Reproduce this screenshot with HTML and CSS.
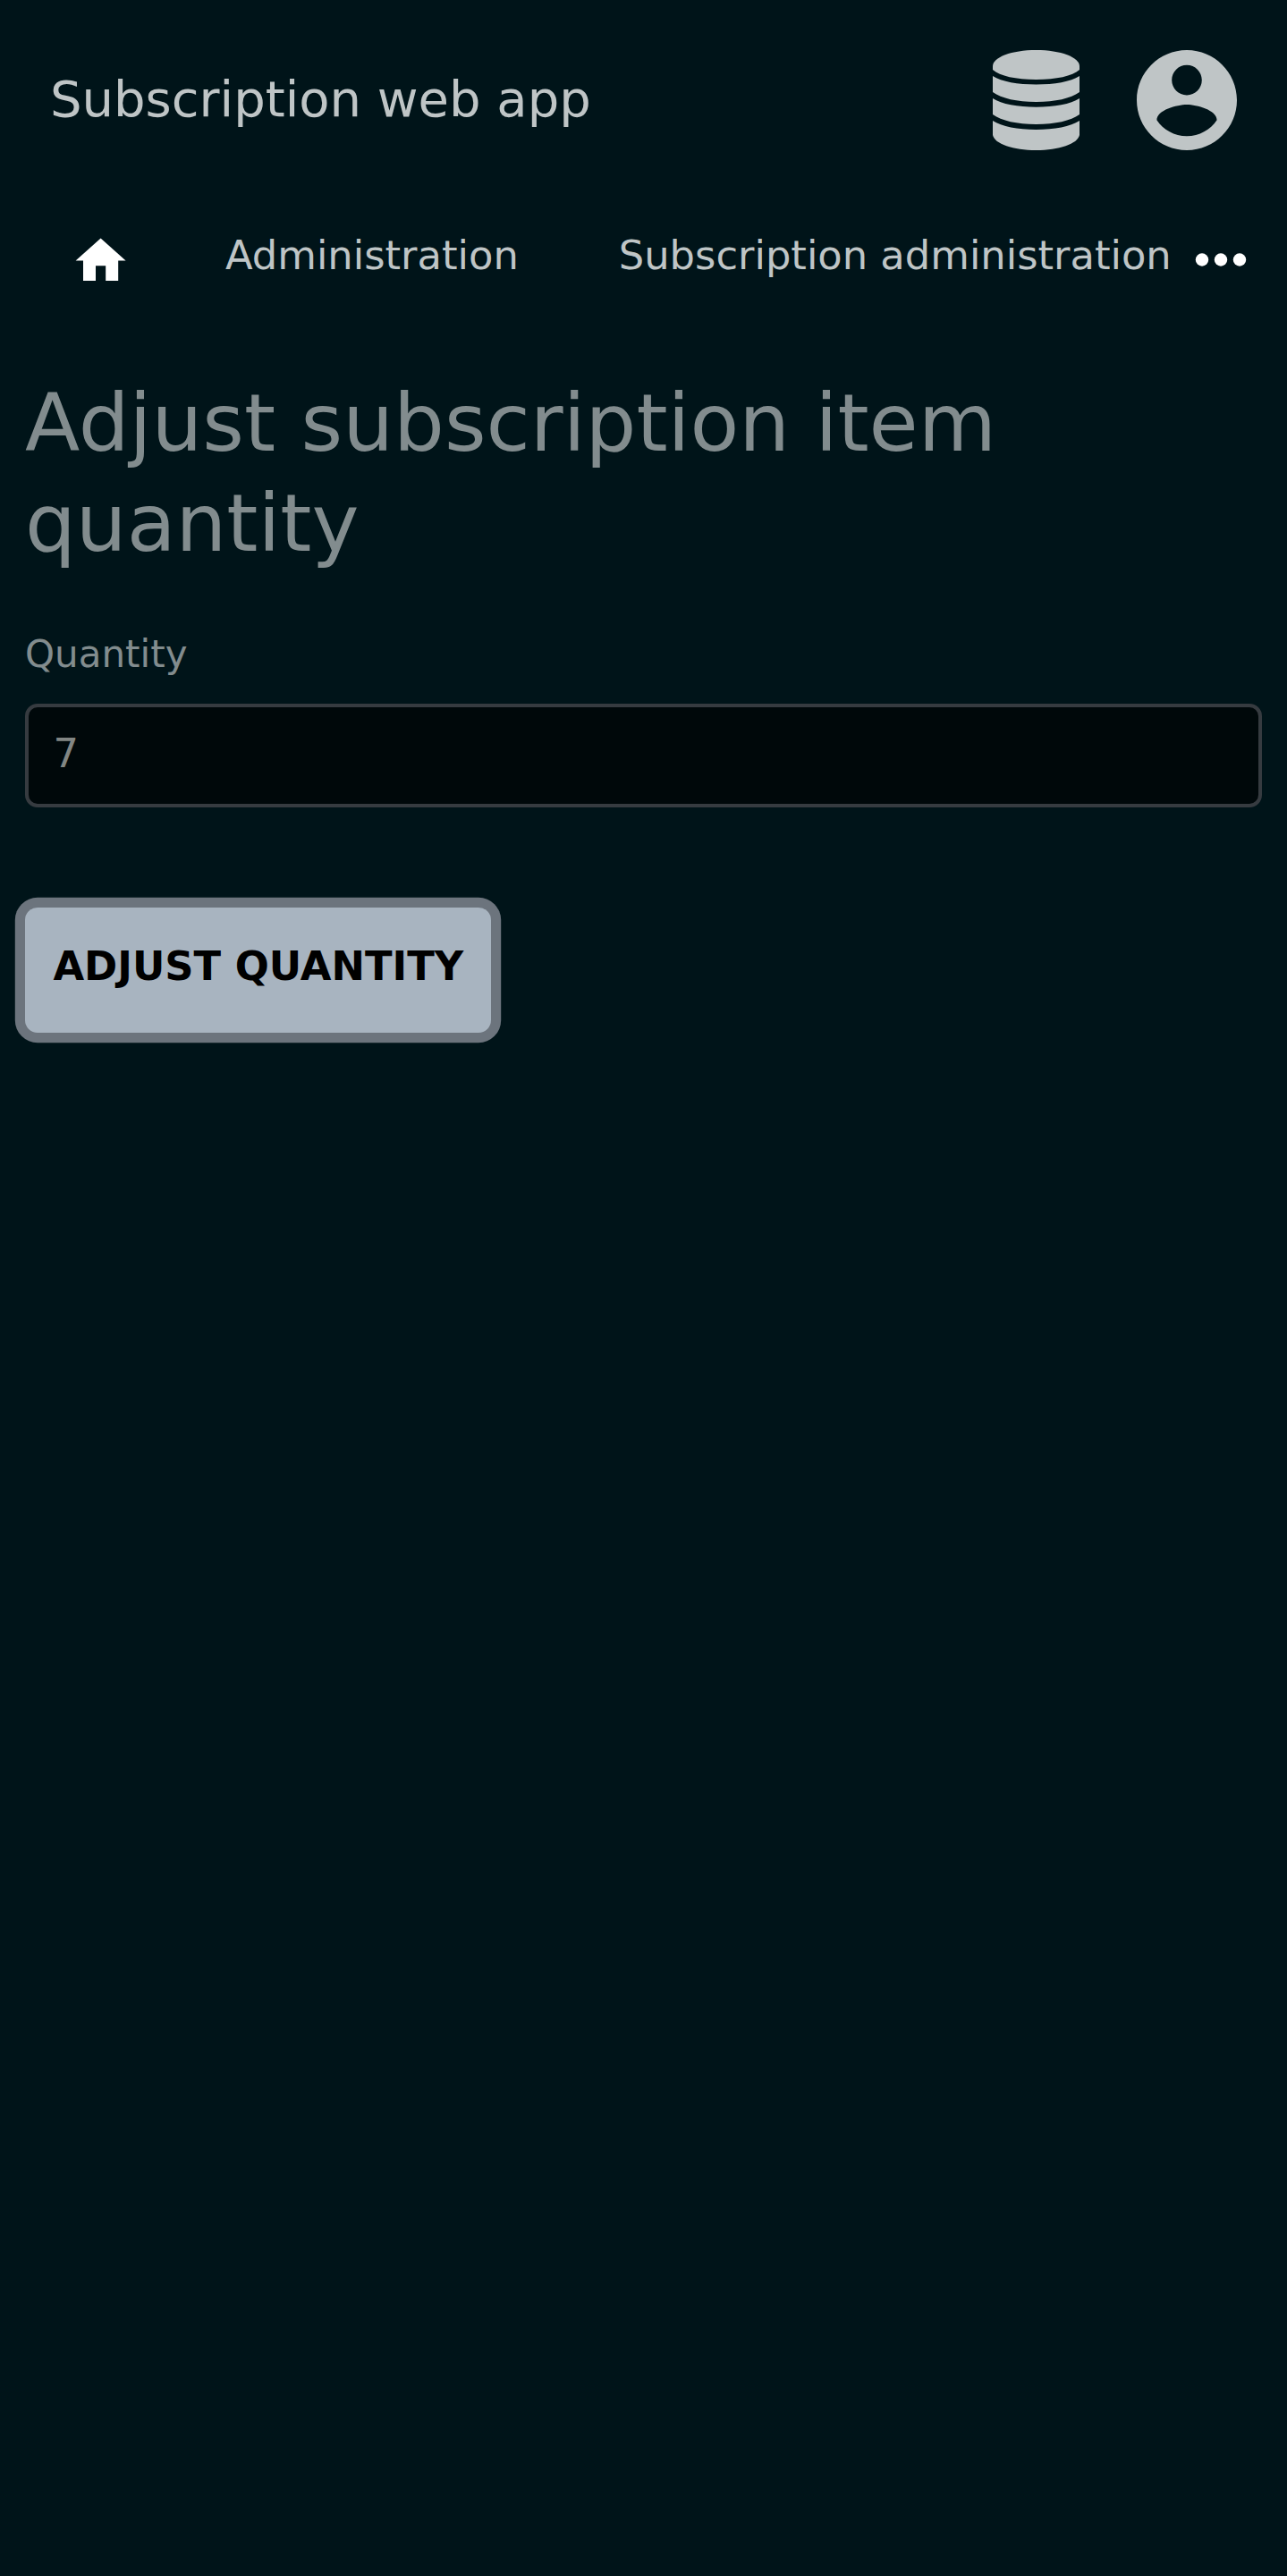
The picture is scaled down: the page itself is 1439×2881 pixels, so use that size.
FILE: index.html
```html
<!DOCTYPE html>
<html lang="en">
<head>
<meta charset="utf-8">
<title>Subscription web app</title>
<link rel="stylesheet" href="styles.css">
</head>
<body>
<header class="topbar">
  <div class="brand">Subscription web app</div>
  <svg class="db-icon" viewBox="0 0 97 112">
    <path d="M0 18C0 8 21 0 48.500 0S97 8 97 18V22C89 29 71 33 48.500 33S8 29 0 22Z"/>
    <path d="M0 29C10 35.500 28 38.500 48.500 38.500S87 35.500 97 29V47C87 54 70 58 48.500 58S10 54 0 47Z"/>
    <path d="M0 54C10 60.500 28 63.700 48.500 63.700S87 60.500 97 54V72C87 79 70 83 48.500 83S10 79 0 72Z"/>
    <path d="M0 79C10 85.500 28 89 48.500 89S87 85.500 97 79V95C95 105 74 112 48.500 112S2 105 0 95Z"/>
  </svg>
  <svg class="user-icon" viewBox="2 2 20 20">
    <path d="M12 2C6.480 2 2 6.480 2 12s4.480 10 10 10 10-4.480 10-10S17.520 2 12 2zm0 3c1.660 0 3 1.340 3 3s-1.340 3-3 3-3-1.340-3-3 1.340-3 3-3zm0 14.200c-2.500 0-4.710-1.280-6-3.220.03-1.990 4-3.080 6-3.080 1.990 0 5.970 1.090 6 3.080-1.290 1.940-3.500 3.220-6 3.220z"/>
  </svg>
</header>
<nav class="menu">
  <svg class="home-icon" viewBox="0 0 24 24"><path d="M10 20v-6h4v6h5v-8h3L12 3 2 12h3v8z"/></svg>
  <a class="menu-link">Administration</a>
  <a class="menu-link">Subscription administration</a>
  <svg class="more-icon" viewBox="0 0 56 15"><circle cx="7" cy="7.500" r="7.200"/><circle cx="28" cy="7.500" r="7.200"/><circle cx="49" cy="7.500" r="7.200"/></svg>
</nav>
<main class="content">
  <h1 class="heading">Adjust subscription item quantity</h1>
  <label class="label" for="quantity">Quantity</label>
  <input class="field" id="quantity" type="text" value="7">
  <button class="submit" type="button">ADJUST QUANTITY</button>
</main>
</body>
</html>
```

FILE: styles.css
```css
* { box-sizing: border-box; }

body {
  margin: 0;
  min-height: 2881px;
  background: #001419;
  color: #828c8e;
  font-family: "DejaVu Sans", sans-serif;
  font-size: 44.8px;
}

svg {
  display: block;
  flex: none;
  overflow: visible;
}

.topbar {
  display: flex;
  align-items: center;
  height: 224px;
  padding: 0 56.300px 0 56px;
  color: #bfc5c6;
  fill: #bfc5c6;
}

.brand {
  flex: 1;
  padding-bottom: 3px;
  font-size: 56px;
  line-height: 84px;
}

.db-icon {
  width: 97px;
  height: 112px;
  margin-right: 63.700px;
}

.user-icon {
  width: 112px;
  height: 112px;
}

.menu {
  display: flex;
  align-items: center;
  height: 132px;
  padding: 0 46.200px 0 79px;
  color: #bfc5c6;
  fill: #fff;
}

.home-icon {
  width: 67.200px;
  height: 67.200px;
  margin: 4px 105.800px 0 0;
}

.menu-link {
  margin-right: 112px;
  padding-bottom: 9px;
  line-height: 67px;
  white-space: nowrap;
}

.menu-link + .menu-link { margin-right: 0; }

.more-icon {
  width: 56px;
  height: 15px;
  margin-left: auto;
}

.content {
  display: flex;
  flex-direction: column;
  align-items: flex-start;
  padding: 61px 28px 0;
}

.heading {
  margin: 0 0 59px;
  font-size: 89.600px;
  font-weight: 400;
  line-height: 112px;
}

.label {
  font-size: 42px;
  line-height: 63px;
}

.field {
  width: 100%;
  height: 116px;
  margin: 24px 0 112px;
  padding: 0 27.500px 5px;
  border: 4px solid #363b40;
  border-radius: 14px;
  background: #00080a;
  color: #828684;
  font: inherit;
}

.submit {
  height: 140px;
  padding: 0 31px 9px 31.400px;
  border: 0;
  border-radius: 14px;
  background: #a8b4c0;
  box-shadow: 0 0 0 11.200px #6c747d;
  color: #000;
  font: inherit;
  font-weight: 700;
}
```
